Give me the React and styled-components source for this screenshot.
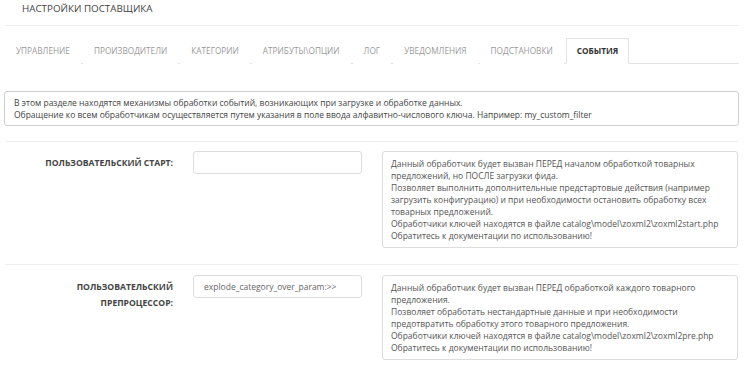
import React from "react";
import styled, { createGlobalStyle } from "styled-components";

const Global = createGlobalStyle`
  html, body { margin: 0; padding: 0; background: #fff; }
  body { font-family: "Open Sans", "Noto Sans", sans-serif; color: #444; }
  * { box-sizing: border-box; }
`;

const Page = styled.div`
  width: 750px;
  padding: 0 11px 0 5px;
`;

const Header = styled.div`
  padding: 2px 0 9px 17px;
  border-bottom: 1px solid #eee;
`;

const Title = styled.h1`
  margin: 0;
  font-size: 9.8px;
  line-height: 14px;
  font-weight: 400;
  color: #444;
`;

const Tabs = styled.ul`
  display: flex;
  list-style: none;
  margin: 12px 0 0;
  padding: 0;
  border-bottom: 1px solid #e3e3e3;
`;

const Tab = styled.li`
  margin: 0 2px -1px 0;
`;

const TabLink = styled.a`
  display: block;
  padding: 0 10px;
  line-height: 24px;
  font-size: 8.25px;
  text-transform: uppercase;
  text-decoration: none;
  color: ${(p) => (p.$active ? "#333" : "#9a9a9a")};
  font-weight: ${(p) => (p.$active ? 700 : 400)};
  border: 1px solid ${(p) => (p.$active ? "#e3e3e3" : "transparent")};
  border-bottom-color: ${(p) => (p.$active ? "#fff" : "transparent")};
  background: #fff;
`;

const Alert = styled.div`
  margin: 27px 0 15px -1px;
  padding: 5px 9px 4px;
  border: 1px solid #cfcfcf;
  border-radius: 3px;
  font-size: 8.5px;
  line-height: 12px;
  color: #444;
`;

const Row = styled.div`
  display: grid;
  grid-template-columns: 170px 169px 357px;
  column-gap: 18px;
  align-items: start;
  border-top: 1px solid #efefef;
  padding: ${(p) => (p.$first ? "9px 0 16px" : "10px 0 16px")};
  & > :nth-child(3) { margin-left: 2px; }
`;

const Label = styled.label`
  display: block;
  padding: 4px 2px 0 15px;
  text-align: right;
  font-size: 8.6px;
  line-height: 16px;
  font-weight: 700;
  color: #444;
  text-transform: uppercase;
`;

const Input = styled.input`
  display: block;
  width: 169px;
  height: 23px;
  margin: 0;
  padding: 0 10px;
  border: 1px solid #ddd;
  border-radius: 3px;
  font-family: "Open Sans", "Noto Sans", sans-serif;
  font-size: 8.5px;
  color: #666;
  background: #fff;
  outline: none;
`;

const Help = styled.div`
  width: 356px;
  padding: 6px 8px 5px;
  border: 1px solid #ddd;
  border-radius: 3px;
  font-size: 8.5px;
  line-height: 12px;
  color: #555;
`;

const Line = styled.div``;

const tabs = [
  "Управление",
  "Производители",
  "Категории",
  "Атрибуты\\Опции",
  "Лог",
  "Уведомления",
  "Подстановки",
  "События",
];

export default function App() {
  return (
    <Page>
      <Global />
      <Header>
        <Title>НАСТРОЙКИ ПОСТАВЩИКА</Title>
      </Header>
      <Tabs>
        {tabs.map((t) => (
          <Tab key={t}>
            <TabLink href="#" $active={t === "События"}>
              {t}
            </TabLink>
          </Tab>
        ))}
      </Tabs>
      <Alert>
        <Line>
          В этом разделе находятся механизмы обработки событий, возникающих при загрузке и обработке данных.
        </Line>
        <Line>
          Обращение ко всем обработчикам осуществляется путем указания в поле ввода алфавитно-числового ключа. Например: my_custom_filter
        </Line>
      </Alert>
      <Row $first>
        <Label>Пользовательский старт:</Label>
        <Input defaultValue="" />
        <Help>
          <Line>
            Данный обработчик будет вызван ПЕРЕД началом обработкой товарных предложений, но ПОСЛЕ загрузки фида.
          </Line>
          <Line>
            Позволяет выполнить дополнительные предстартовые действия (например загрузить конфигурацию) и при необходимости остановить обработку всех товарных предложений.
          </Line>
          <Line>Обработчики ключей находятся в файле catalog\model\zoxml2\zoxml2start.php</Line>
          <Line>Обратитесь к документации по использованию!</Line>
        </Help>
      </Row>
      <Row>
        <Label>Пользовательский препроцессор:</Label>
        <Input defaultValue="explode_category_over_param:>>" />
        <Help>
          <Line>
            Данный обработчик будет вызван ПЕРЕД обработкой каждого товарного предложения.
          </Line>
          <Line>
            Позволяет обработать нестандартные данные и при необходимости предотвратить обработку этого товарного предложения.
          </Line>
          <Line>Обработчики ключей находятся в файле catalog\model\zoxml2\zoxml2pre.php</Line>
          <Line>Обратитесь к документации по использованию!</Line>
        </Help>
      </Row>
    </Page>
  );
}
